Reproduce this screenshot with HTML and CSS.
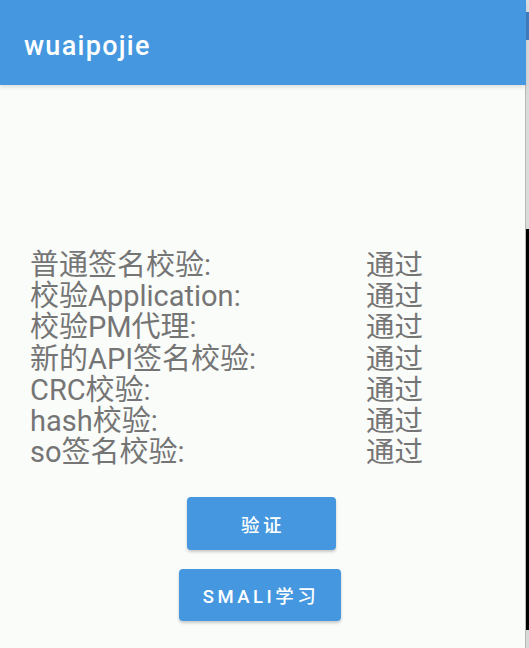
FILE: index.html
```html
<!DOCTYPE html>
<html>
<head>
<meta charset="utf-8">
<link rel="stylesheet" href="styles.css">
</head>
<body>
<div class="screen">
  <header class="appbar"><span class="title">wuaipojie</span></header>
  <main class="content">
    <div class="checks">
      <span class="label">普通签名校验:</span><span class="result">通过</span>
      <span class="label">校验Application:</span><span class="result">通过</span>
      <span class="label">校验PM代理:</span><span class="result">通过</span>
      <span class="label">新的API签名校验:</span><span class="result">通过</span>
      <span class="label">CRC校验:</span><span class="result">通过</span>
      <span class="label">hash校验:</span><span class="result">通过</span>
      <span class="label">so签名校验:</span><span class="result">通过</span>
    </div>
    <div class="actions">
      <button class="btn btn-verify">验证</button>
      <button class="btn btn-smali">SMALI学习</button>
    </div>
  </main>
</div>
<div class="edge"><div class="edge-top"></div><div class="edge-blue"></div><div class="edge-mid"></div><div class="edge-black"></div></div>
</body>
</html>
```
FILE: styles.css
```css
html, body {
  margin: 0;
  padding: 0;
  width: 529px;
  height: 648px;
  overflow: hidden;
  background: #fafcfa;
  font-family: Roboto, "Noto Sans CJK SC", sans-serif;
}
.screen {
  width: 526px;
  height: 648px;
  display: flex;
  flex-direction: column;
}
.appbar {
  height: 85px;
  flex: none;
  background: #4598e0;
  display: flex;
  align-items: center;
  padding-left: 24px;
  box-shadow: 0 2px 4px rgba(0,0,0,0.12);
  position: relative;
  z-index: 1;
}
.title {
  color: #fff;
  font-size: 27px;
  font-weight: 500;
  letter-spacing: 1.3px;
  padding-top: 6px;
}
.content {
  flex: 1;
  display: flex;
  flex-direction: column;
}
.checks {
  margin-top: 165px;
  margin-left: 30px;
  display: grid;
  grid-template-columns: 336px auto;
  font-size: 29px;
  line-height: 31.2px;
  color: #757575;
}
.label, .result { white-space: nowrap; }
.result { font-size: 28.5px; }
.actions {
  margin-top: 29px;
  display: flex;
  flex-direction: column;
  align-items: center;
  gap: 19px;
  padding-right: 3px;
}
.btn {
  border: none;
  border-radius: 4px;
  background: #4598e0;
  color: #fff;
  font-family: Roboto, "Noto Sans CJK SC", sans-serif;
  font-weight: 500;
  font-size: 18.5px;
  letter-spacing: 3.5px;
  box-shadow: 0 2px 3px rgba(0,0,0,0.2);
  padding: 0 0 0 3px;
}
.btn-verify { width: 149px; height: 53px; }
.btn-smali { width: 162px; height: 52px; margin-right: 4px; }
.edge {
  position: absolute;
  top: 0;
  right: 0;
  width: 3px;
  height: 648px;
  border-left: 1px solid #b8b8b8;
  background: #d8d8d8;
}
.edge-top { height: 12px; background: #e0e0e0; }
.edge-blue { height: 28px; background: #3f7fc0; }
.edge-mid { height: 189px; background: #dadada; }
.edge-black { height: 401px; background: #000; }
```
